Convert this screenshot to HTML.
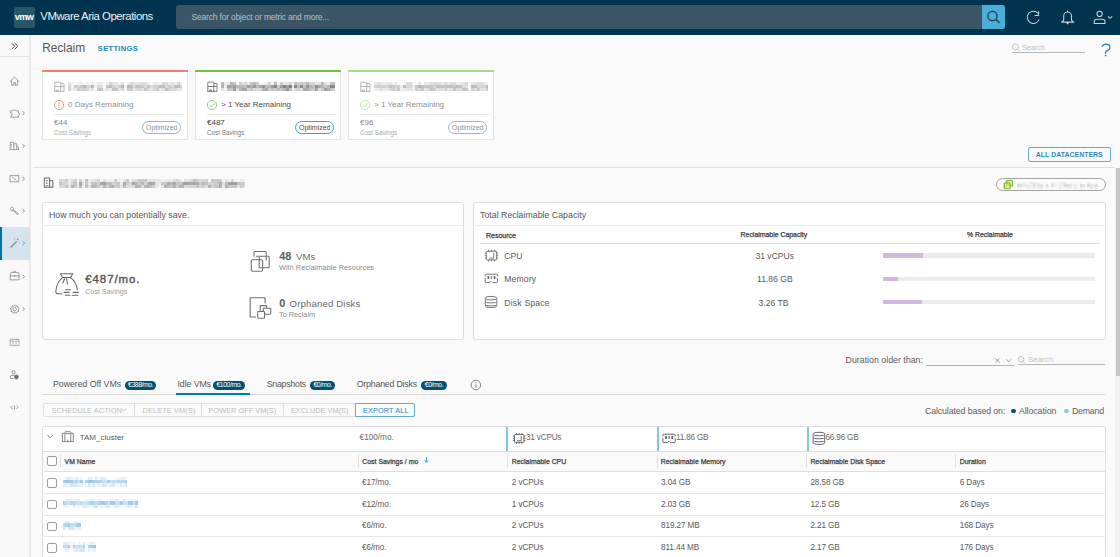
<!DOCTYPE html>
<html><head><meta charset="utf-8">
<style>
*{box-sizing:border-box;margin:0;padding:0}
html,body{width:1120px;height:557px;overflow:hidden;background:#fafafa;font-family:"Liberation Sans",sans-serif;color:#565656}
.a{position:absolute}
.t{position:absolute;white-space:nowrap;line-height:1}
svg{position:absolute;overflow:visible}
#hdr{left:0;top:0;width:1120px;height:34.5px;background:#00344e}
.blur{position:absolute;border-radius:1px}
.btn{position:absolute;top:403.5px;height:13.5px;border:1px solid #dcdcdc;border-right:none}
.bt{position:absolute;white-space:nowrap;line-height:1;font-size:7px;letter-spacing:.55px;color:#c3c3c3}
.badge{position:absolute;background:#004f74;border-radius:5px;height:8.8px;color:#fff;font-size:6.9px;line-height:8.5px;text-align:center;letter-spacing:-.45px}
.hl{position:absolute;height:1px;background:#e6e6e6}
.vl{position:absolute;width:1px;background:#e6e6e6}
.cb{position:absolute;width:9.4px;height:9.4px;border:1px solid #9d9d9d;border-radius:2px;background:#fff}
</style></head><body>

<!-- HEADER -->
<div id="hdr" class="a"></div>
<div class="a" style="left:14.3px;top:7px;width:20.6px;height:20.6px;background:#2a566b;border-radius:2px"></div>
<div class="t" style="left:14.8px;top:13.1px;font-size:9.2px;font-weight:700;color:#fff;letter-spacing:-.65px">vmw</div>
<div class="t" style="left:40.3px;top:10.9px;font-size:11.4px;letter-spacing:-.5px;color:#eef2f5">VMware Aria Operations</div>
<div class="a" style="left:176px;top:5px;width:829px;height:23.7px;background:#3a5566;border-radius:3px"></div>
<div class="t" style="left:191.6px;top:12.8px;font-size:8.5px;letter-spacing:-.2px;color:#b3c0c8">Search for object or metric and more...</div>
<div class="a" style="left:981.5px;top:5px;width:23.5px;height:23.7px;background:#49afd9;border-radius:0 3px 3px 0"></div>
<svg style="left:0;top:0" width="1120" height="35">
 <g fill="none" stroke="#1d3a4a" stroke-width="1.3"><circle cx="992.5" cy="16" r="4.6"/><path d="M995.8 19.3L999.5 23"/></g>
 <g fill="none" stroke="#c5d0d8" stroke-width="1.05" stroke-linejoin="round" stroke-linecap="round">
  <path d="M1037.8 13.1A6.1 6.1 0 1 0 1038.9 19.9"/><path d="M1035 15.5h3.6v-3.9"/>
  <path d="M1061.6 22.1h12.2M1062.3 22.1l1.4-2.2v-4a3.9 3.9 0 0 1 7.8 0v4l1.4 2.2M1066.6 22.4l1 1.5 1-1.5M1067.6 10.8v.9"/>
  <circle cx="1099.6" cy="13.9" r="2.6"/><path d="M1094.2 23.4v-1.8a2.4 2.4 0 0 1 2.4-2.3h6a2.4 2.4 0 0 1 2.4 2.3v1.8z"/>
  <path d="M1108.2 16.6l1.8 1.9 1.9-1.9"/>
 </g>
</svg>

<!-- SIDEBAR -->
<div class="a" style="left:0;top:34.5px;width:30px;height:523px;background:#f9f9f9"></div><div class="a" style="left:29.3px;top:34.5px;width:1.8px;height:523px;background:#e9e9e9"></div>
<div class="hl" style="left:0;top:56px;width:30px;background:#e3e3e3"></div>
<div class="a" style="left:0;top:227.3px;width:29.5px;height:32.3px;background:#d5e3ed"></div>
<div class="a" style="left:0;top:227.3px;width:2px;height:32.3px;background:#0072a3"></div>
<svg style="left:0;top:0" width="30" height="557">
 <g fill="none" stroke="#5a5a5a" stroke-width="1" stroke-linejoin="round" stroke-linecap="round">
  <path d="M11.8 43.3l2.9 2.9-2.9 2.9M14.9 43.3l2.9 2.9-2.9 2.9"/>
 </g>
 <g fill="none" stroke="#858585" stroke-width="0.8" stroke-linejoin="round">
  <!-- home -->
  <path d="M10.2 81.3L14.5 77L18.8 81.3M11.5 80.2v5h2.3v-2.6h1.6v2.6h2.3v-5"/>
  <!-- puzzle -->
  <path d="M10.3 110.8h2.6a1.5 1.5 0 0 1 2.9 0h2.6v2.3a1.4 1.4 0 0 1 0 2.7v1.4h-7.8l1.2-2.2a1.5 1.5 0 0 0-1.5-2.4z"/>
  <!-- buildings -->
  <path d="M10.2 149.6V142.3h3.6v7.3M13.8 143.8h3v5.8M16.8 146.3l1.8 1.3v2M9.8 149.6h9"/><path d="M11.4 144v1M11.4 146.5v1" />
  <!-- monitor -->
  <rect x="10" y="175.6" width="8.8" height="6.2"/><path d="M12.2 176.8l4.2 3.6"/>
  <!-- wrench -->
  <path d="M10.3 208.3l1.9-1.3 1.6 1.5-.9 1.2 5.6 4-1.1 1-4.6-4.6-1.2.8z"/>
  <!-- wand -->
  <path d="M10.5 247.6l6.2-6.2" stroke-width="1.3"/><path d="M17.6 238.6v1.6M16.8 239.4h1.6M14.5 238.5v.9M19.4 242.4v.9"/>
  <!-- briefcase -->
  <path d="M10.2 279.9v-5.5a2 2 0 0 1 2-2h4.9a2 2 0 0 1 2 2v5.5zM10.2 275.9h8.9M14.6 275.2v1.6M13.3 272.4v-.6h2.6v.6"/>
  <!-- gear -->
  <path d="M14.6 305l1.3 1 1.6-.2.3 1.6 1.3 1-.8 1.4.4 1.6-1.6.4-.8 1.4-1.5-.7-1.5.7-.8-1.4-1.6-.4.4-1.6-.8-1.4 1.3-1 .3-1.6 1.6.2z"/><circle cx="14.6" cy="309.2" r="1.8"/>
  <!-- calendar -->
  <rect x="10.1" y="339.4" width="8.9" height="6.2" stroke="#a0a0a0"/><path d="M10.1 341.2h8.9M12.3 338.4v1.8M16.8 338.4v1.8M13 341.5v4M16 341.5v4" stroke="#a8a8a8"/>
  <!-- user gear -->
  <circle cx="13.6" cy="372.2" r="1.6"/><path d="M10.2 378.4v-1.3a1.8 1.8 0 0 1 1.8-1.8h2.6M10.2 378.4h4"/><path d="M16.4 374.9l1.9.7v1.5a2.2 2.2 0 0 1-1.9 2.1 2.2 2.2 0 0 1-1.9-2.1v-1.5z" fill="#6a6a6a"/>
  <!-- code -->
  <path d="M12.6 405.8l-1.6 1.6 1.6 1.6M16.4 405.8l1.6 1.6-1.6 1.6M14.5 405.6v3.8"/>
 </g>
 <g fill="none" stroke="#7a7a7a" stroke-width="0.85">
  <path d="M22.6 111.2l1.9 1.9-1.9 1.9M22.6 144.2l1.9 1.9-1.9 1.9M22.6 176.8l1.9 1.9-1.9 1.9M22.6 209l1.9 1.9-1.9 1.9M22.6 241.4l1.9 1.9-1.9 1.9M22.6 274.7l1.9 1.9-1.9 1.9M22.6 307.2l1.9 1.9-1.9 1.9"/>
 </g>
</svg>

<!-- TITLE -->
<div class="t" style="left:42.2px;top:42.5px;font-size:11.9px;color:#565656">Reclaim</div>
<div class="t" style="left:97.8px;top:44.75px;font-size:7.5px;font-weight:700;letter-spacing:.35px;color:#1a86bd">SETTINGS</div>
<svg style="left:0;top:0" width="1120" height="60">
 <g fill="none" stroke="#bdbdbd" stroke-width="0.9"><circle cx="1015.5" cy="46.8" r="3"/><path d="M1017.6 48.9l2 2"/></g>
</svg>
<div class="t" style="left:1022.3px;top:44px;font-size:7.2px;color:#bcbcbc">Search</div>
<div class="hl" style="left:1012px;top:52px;width:73px;background:#b8b8b8"></div>
<svg style="left:0;top:0" width="1120" height="60"><path d="M1102.3 46.2C1103.2 44.9 1104.4 44.1 1106 44.1 1108.3 44.1 1110 45.5 1110 47.4 1110 49.4 1108.2 50 1106.9 50.8 1105.9 51.4 1105.5 52 1105.5 53.2" fill="none" stroke="#1a80bd" stroke-width="1.25" stroke-linecap="round"/><circle cx="1105.6" cy="55.5" r="0.85" fill="#1a80bd"/></svg>

<!-- CARDS -->
<!--CARDS-->
<div class="a" style="left:42px;top:70px;width:146px;height:69.8px;background:#fff;border:1px solid #e4e4e4;border-top:none"></div>
<div class="a" style="left:42px;top:70px;width:146px;height:2.3px;background:#f77b7b"></div>
<svg style="left:0;top:0" width="600" height="150"><g fill="none" stroke="#a5a5a5" stroke-width="0.85"><path d="M54.8 91.3V82.6a.5.5 0 0 1 .5-.5h5a.5.5 0 0 1 .5.5V91.3M60.8 83.6h2.8a.4.4 0 0 1 .4.4V91.3M54.4 91.4h9.9M55.1 86.5h8.7M56.5 91.3v-1.2h2v1.2"/></g></svg>
<div class="a" style="left:67.5px;top:81.8px;width:114.5px;height:9.30px;filter:blur(0.5px)"><div class="a" style="left:0;top:0.00px;width:114.5px;height:3.15px;background:linear-gradient(90deg,rgba(85,85,85,0.15) 0.0px 2.9px,rgba(85,85,85,0.06) 2.9px 5.9px,rgba(85,85,85,0.04) 5.9px 8.8px,rgba(85,85,85,0.08) 8.8px 11.7px,rgba(85,85,85,0.09) 11.7px 14.7px,rgba(85,85,85,0.04) 14.7px 17.6px,rgba(85,85,85,0.08) 17.6px 20.6px,rgba(85,85,85,0.05) 20.6px 23.5px,rgba(85,85,85,0.09) 23.5px 26.4px,rgba(85,85,85,0.05) 26.4px 29.4px,rgba(85,85,85,0.11) 29.4px 32.3px,rgba(85,85,85,0.11) 32.3px 35.2px,rgba(85,85,85,0.02) 35.2px 38.2px,rgba(85,85,85,0.09) 38.2px 41.1px,rgba(85,85,85,0.24) 41.1px 44.0px,rgba(85,85,85,0.17) 44.0px 47.0px,rgba(85,85,85,0.16) 47.0px 49.9px,rgba(85,85,85,0.06) 49.9px 52.8px,rgba(85,85,85,0.19) 52.8px 55.8px,rgba(85,85,85,0.02) 55.8px 58.7px,rgba(85,85,85,0.11) 58.7px 61.7px,rgba(85,85,85,0.25) 61.7px 64.6px,rgba(85,85,85,0.17) 64.6px 67.5px,rgba(85,85,85,0.15) 67.5px 70.5px,rgba(85,85,85,0.18) 70.5px 73.4px,rgba(85,85,85,0.21) 73.4px 76.3px,rgba(85,85,85,0.20) 76.3px 79.3px,rgba(85,85,85,0.08) 79.3px 82.2px,rgba(85,85,85,0.03) 82.2px 85.1px,rgba(85,85,85,0.10) 85.1px 88.1px,rgba(85,85,85,0.09) 88.1px 91.0px,rgba(85,85,85,0.07) 91.0px 93.9px,rgba(85,85,85,0.24) 93.9px 96.9px,rgba(85,85,85,0.22) 96.9px 99.8px,rgba(85,85,85,0.10) 99.8px 102.8px,rgba(85,85,85,0.17) 102.8px 105.7px,rgba(85,85,85,0.11) 105.7px 108.6px,rgba(85,85,85,0.23) 108.6px 111.6px,rgba(85,85,85,0.13) 111.6px 114.5px)"></div><div class="a" style="left:0;top:3.10px;width:114.5px;height:3.15px;background:linear-gradient(90deg,rgba(85,85,85,0.24) 0.0px 2.9px,rgba(85,85,85,0.07) 2.9px 5.9px,rgba(85,85,85,0.32) 5.9px 8.8px,rgba(85,85,85,0.24) 8.8px 11.7px,rgba(85,85,85,0.32) 11.7px 14.7px,rgba(85,85,85,0.40) 14.7px 17.6px,rgba(85,85,85,0.27) 17.6px 20.6px,rgba(85,85,85,0.23) 20.6px 23.5px,rgba(85,85,85,0.42) 23.5px 26.4px,rgba(85,85,85,0.09) 26.4px 29.4px,rgba(85,85,85,0.20) 29.4px 32.3px,rgba(85,85,85,0.19) 32.3px 35.2px,rgba(85,85,85,0.06) 35.2px 38.2px,rgba(85,85,85,0.33) 38.2px 41.1px,rgba(85,85,85,0.37) 41.1px 44.0px,rgba(85,85,85,0.28) 44.0px 47.0px,rgba(85,85,85,0.19) 47.0px 49.9px,rgba(85,85,85,0.27) 49.9px 52.8px,rgba(85,85,85,0.42) 52.8px 55.8px,rgba(85,85,85,0.09) 55.8px 58.7px,rgba(85,85,85,0.42) 58.7px 61.7px,rgba(85,85,85,0.39) 61.7px 64.6px,rgba(85,85,85,0.18) 64.6px 67.5px,rgba(85,85,85,0.36) 67.5px 70.5px,rgba(85,85,85,0.35) 70.5px 73.4px,rgba(85,85,85,0.31) 73.4px 76.3px,rgba(85,85,85,0.24) 76.3px 79.3px,rgba(85,85,85,0.34) 79.3px 82.2px,rgba(85,85,85,0.20) 82.2px 85.1px,rgba(85,85,85,0.28) 85.1px 88.1px,rgba(85,85,85,0.29) 88.1px 91.0px,rgba(85,85,85,0.41) 91.0px 93.9px,rgba(85,85,85,0.39) 93.9px 96.9px,rgba(85,85,85,0.24) 96.9px 99.8px,rgba(85,85,85,0.30) 99.8px 102.8px,rgba(85,85,85,0.22) 102.8px 105.7px,rgba(85,85,85,0.40) 105.7px 108.6px,rgba(85,85,85,0.39) 108.6px 111.6px,rgba(85,85,85,0.25) 111.6px 114.5px)"></div><div class="a" style="left:0;top:6.20px;width:114.5px;height:3.15px;background:linear-gradient(90deg,rgba(85,85,85,0.26) 0.0px 2.9px,rgba(85,85,85,0.08) 2.9px 5.9px,rgba(85,85,85,0.14) 5.9px 8.8px,rgba(85,85,85,0.29) 8.8px 11.7px,rgba(85,85,85,0.23) 11.7px 14.7px,rgba(85,85,85,0.29) 14.7px 17.6px,rgba(85,85,85,0.23) 17.6px 20.6px,rgba(85,85,85,0.10) 20.6px 23.5px,rgba(85,85,85,0.18) 23.5px 26.4px,rgba(85,85,85,0.03) 26.4px 29.4px,rgba(85,85,85,0.33) 29.4px 32.3px,rgba(85,85,85,0.32) 32.3px 35.2px,rgba(85,85,85,0.09) 35.2px 38.2px,rgba(85,85,85,0.18) 38.2px 41.1px,rgba(85,85,85,0.11) 41.1px 44.0px,rgba(85,85,85,0.32) 44.0px 47.0px,rgba(85,85,85,0.34) 47.0px 49.9px,rgba(85,85,85,0.12) 49.9px 52.8px,rgba(85,85,85,0.22) 52.8px 55.8px,rgba(85,85,85,0.04) 55.8px 58.7px,rgba(85,85,85,0.29) 58.7px 61.7px,rgba(85,85,85,0.29) 61.7px 64.6px,rgba(85,85,85,0.13) 64.6px 67.5px,rgba(85,85,85,0.22) 67.5px 70.5px,rgba(85,85,85,0.24) 70.5px 73.4px,rgba(85,85,85,0.17) 73.4px 76.3px,rgba(85,85,85,0.32) 76.3px 79.3px,rgba(85,85,85,0.21) 79.3px 82.2px,rgba(85,85,85,0.15) 82.2px 85.1px,rgba(85,85,85,0.23) 85.1px 88.1px,rgba(85,85,85,0.28) 88.1px 91.0px,rgba(85,85,85,0.15) 91.0px 93.9px,rgba(85,85,85,0.18) 93.9px 96.9px,rgba(85,85,85,0.35) 96.9px 99.8px,rgba(85,85,85,0.26) 99.8px 102.8px,rgba(85,85,85,0.21) 102.8px 105.7px,rgba(85,85,85,0.23) 105.7px 108.6px,rgba(85,85,85,0.13) 108.6px 111.6px,rgba(85,85,85,0.16) 111.6px 114.5px)"></div></div>
<svg style="left:0;top:0" width="600" height="150"><g fill="none" stroke="#f08a8a" stroke-width="0.9"><circle cx="59" cy="105" r="4.6"/><path d="M59 102.2v3.6M59 106.8v1"/></g></svg>
<div class="t" style="left:68px;top:101px;font-size:8px;color:#8f8f8f">0 Days Remaining</div>
<div class="hl" style="left:54px;top:114.3px;width:130px;background:#e8e8e8"></div>
<div class="t" style="left:54px;top:119.2px;font-size:8px;color:#8a8a8a">€44</div>
<div class="t" style="left:54px;top:129.8px;font-size:6.3px;color:#ababab">Cost Savings</div>
<div class="a" style="left:142px;top:121.3px;width:38.6px;height:12.3px;border:1px solid #7fbde0;border-radius:6.5px"></div>
<div class="t" style="left:146px;top:124.3px;font-size:7px;color:#8f8f8f">Optimized</div>
<div class="a" style="left:195px;top:70px;width:146px;height:69.8px;background:#fff;border:1px solid #e4e4e4;border-top:none"></div>
<div class="a" style="left:195px;top:70px;width:146px;height:2.3px;background:#72c044"></div>
<svg style="left:0;top:0" width="600" height="150"><g fill="none" stroke="#666666" stroke-width="0.85"><path d="M207.8 91.3V82.6a.5.5 0 0 1 .5-.5h5a.5.5 0 0 1 .5.5V91.3M213.8 83.6h2.8a.4.4 0 0 1 .4.4V91.3M207.4 91.4h9.9M208.1 86.5h8.7M209.5 91.3v-1.2h2v1.2"/></g></svg>
<div class="a" style="left:220.5px;top:81.8px;width:114.5px;height:9.30px;filter:blur(0.5px)"><div class="a" style="left:0;top:0.00px;width:114.5px;height:3.15px;background:linear-gradient(90deg,rgba(85,85,85,0.41) 0.0px 2.9px,rgba(85,85,85,0.11) 2.9px 5.9px,rgba(85,85,85,0.12) 5.9px 8.8px,rgba(85,85,85,0.42) 8.8px 11.7px,rgba(85,85,85,0.34) 11.7px 14.7px,rgba(85,85,85,0.06) 14.7px 17.6px,rgba(85,85,85,0.29) 17.6px 20.6px,rgba(85,85,85,0.16) 20.6px 23.5px,rgba(85,85,85,0.21) 23.5px 26.4px,rgba(85,85,85,0.14) 26.4px 29.4px,rgba(85,85,85,0.34) 29.4px 32.3px,rgba(85,85,85,0.40) 32.3px 35.2px,rgba(85,85,85,0.29) 35.2px 38.2px,rgba(85,85,85,0.06) 38.2px 41.1px,rgba(85,85,85,0.06) 41.1px 44.0px,rgba(85,85,85,0.10) 44.0px 47.0px,rgba(85,85,85,0.26) 47.0px 49.9px,rgba(85,85,85,0.05) 49.9px 52.8px,rgba(85,85,85,0.41) 52.8px 55.8px,rgba(85,85,85,0.07) 55.8px 58.7px,rgba(85,85,85,0.29) 58.7px 61.7px,rgba(85,85,85,0.14) 61.7px 64.6px,rgba(85,85,85,0.17) 64.6px 67.5px,rgba(85,85,85,0.26) 67.5px 70.5px,rgba(85,85,85,0.07) 70.5px 73.4px,rgba(85,85,85,0.34) 73.4px 76.3px,rgba(85,85,85,0.28) 76.3px 79.3px,rgba(85,85,85,0.30) 79.3px 82.2px,rgba(85,85,85,0.29) 82.2px 85.1px,rgba(85,85,85,0.39) 85.1px 88.1px,rgba(85,85,85,0.23) 88.1px 91.0px,rgba(85,85,85,0.25) 91.0px 93.9px,rgba(85,85,85,0.13) 93.9px 96.9px,rgba(85,85,85,0.19) 96.9px 99.8px,rgba(85,85,85,0.42) 99.8px 102.8px,rgba(85,85,85,0.19) 102.8px 105.7px,rgba(85,85,85,0.09) 105.7px 108.6px,rgba(85,85,85,0.34) 108.6px 111.6px,rgba(85,85,85,0.38) 111.6px 114.5px)"></div><div class="a" style="left:0;top:3.10px;width:114.5px;height:3.15px;background:linear-gradient(90deg,rgba(85,85,85,0.44) 0.0px 2.9px,rgba(85,85,85,0.12) 2.9px 5.9px,rgba(85,85,85,0.55) 5.9px 8.8px,rgba(85,85,85,0.49) 8.8px 11.7px,rgba(85,85,85,0.57) 11.7px 14.7px,rgba(85,85,85,0.42) 14.7px 17.6px,rgba(85,85,85,0.40) 17.6px 20.6px,rgba(85,85,85,0.40) 20.6px 23.5px,rgba(85,85,85,0.38) 23.5px 26.4px,rgba(85,85,85,0.57) 26.4px 29.4px,rgba(85,85,85,0.47) 29.4px 32.3px,rgba(85,85,85,0.59) 32.3px 35.2px,rgba(85,85,85,0.39) 35.2px 38.2px,rgba(85,85,85,0.51) 38.2px 41.1px,rgba(85,85,85,0.63) 41.1px 44.0px,rgba(85,85,85,0.40) 44.0px 47.0px,rgba(85,85,85,0.42) 47.0px 49.9px,rgba(85,85,85,0.61) 49.9px 52.8px,rgba(85,85,85,0.67) 52.8px 55.8px,rgba(85,85,85,0.30) 55.8px 58.7px,rgba(85,85,85,0.56) 58.7px 61.7px,rgba(85,85,85,0.72) 61.7px 64.6px,rgba(85,85,85,0.55) 64.6px 67.5px,rgba(85,85,85,0.72) 67.5px 70.5px,rgba(85,85,85,0.12) 70.5px 73.4px,rgba(85,85,85,0.68) 73.4px 76.3px,rgba(85,85,85,0.38) 76.3px 79.3px,rgba(85,85,85,0.69) 79.3px 82.2px,rgba(85,85,85,0.36) 82.2px 85.1px,rgba(85,85,85,0.61) 85.1px 88.1px,rgba(85,85,85,0.44) 88.1px 91.0px,rgba(85,85,85,0.36) 91.0px 93.9px,rgba(85,85,85,0.65) 93.9px 96.9px,rgba(85,85,85,0.50) 96.9px 99.8px,rgba(85,85,85,0.43) 99.8px 102.8px,rgba(85,85,85,0.32) 102.8px 105.7px,rgba(85,85,85,0.42) 105.7px 108.6px,rgba(85,85,85,0.70) 108.6px 111.6px,rgba(85,85,85,0.67) 111.6px 114.5px)"></div><div class="a" style="left:0;top:6.20px;width:114.5px;height:3.15px;background:linear-gradient(90deg,rgba(85,85,85,0.17) 0.0px 2.9px,rgba(85,85,85,0.06) 2.9px 5.9px,rgba(85,85,85,0.36) 5.9px 8.8px,rgba(85,85,85,0.31) 8.8px 11.7px,rgba(85,85,85,0.57) 11.7px 14.7px,rgba(85,85,85,0.21) 14.7px 17.6px,rgba(85,85,85,0.42) 17.6px 20.6px,rgba(85,85,85,0.52) 20.6px 23.5px,rgba(85,85,85,0.49) 23.5px 26.4px,rgba(85,85,85,0.26) 26.4px 29.4px,rgba(85,85,85,0.34) 29.4px 32.3px,rgba(85,85,85,0.20) 32.3px 35.2px,rgba(85,85,85,0.19) 35.2px 38.2px,rgba(85,85,85,0.20) 38.2px 41.1px,rgba(85,85,85,0.46) 41.1px 44.0px,rgba(85,85,85,0.52) 44.0px 47.0px,rgba(85,85,85,0.28) 47.0px 49.9px,rgba(85,85,85,0.36) 49.9px 52.8px,rgba(85,85,85,0.31) 52.8px 55.8px,rgba(85,85,85,0.41) 55.8px 58.7px,rgba(85,85,85,0.33) 58.7px 61.7px,rgba(85,85,85,0.43) 61.7px 64.6px,rgba(85,85,85,0.59) 64.6px 67.5px,rgba(85,85,85,0.37) 67.5px 70.5px,rgba(85,85,85,0.09) 70.5px 73.4px,rgba(85,85,85,0.23) 73.4px 76.3px,rgba(85,85,85,0.25) 76.3px 79.3px,rgba(85,85,85,0.20) 79.3px 82.2px,rgba(85,85,85,0.50) 82.2px 85.1px,rgba(85,85,85,0.47) 85.1px 88.1px,rgba(85,85,85,0.36) 88.1px 91.0px,rgba(85,85,85,0.32) 91.0px 93.9px,rgba(85,85,85,0.51) 93.9px 96.9px,rgba(85,85,85,0.19) 96.9px 99.8px,rgba(85,85,85,0.31) 99.8px 102.8px,rgba(85,85,85,0.57) 102.8px 105.7px,rgba(85,85,85,0.47) 105.7px 108.6px,rgba(85,85,85,0.36) 108.6px 111.6px,rgba(85,85,85,0.29) 111.6px 114.5px)"></div></div>
<svg style="left:0;top:0" width="600" height="150"><g fill="none" stroke="#8fcc6c" stroke-width="0.9"><circle cx="212" cy="105" r="4.6"/><path d="M209.5 105l1.8 1.9 3.3-3.6"/></g></svg>
<div class="t" style="left:221px;top:101px;font-size:8px;color:#4a4a4a">&gt; 1 Year Remaining</div>
<div class="hl" style="left:207px;top:114.3px;width:130px;background:#e8e8e8"></div>
<div class="t" style="left:207px;top:119.2px;font-size:8px;color:#3c3c3c">€487</div>
<div class="t" style="left:207px;top:129.8px;font-size:6.3px;color:#7a7a7a">Cost Savings</div>
<div class="a" style="left:295px;top:121.3px;width:38.6px;height:12.3px;border:1px solid #3d9fd6;border-radius:6.5px"></div>
<div class="t" style="left:299px;top:124.3px;font-size:7px;color:#4a4a4a">Optimized</div>
<div class="a" style="left:348px;top:70px;width:146px;height:69.8px;background:#fff;border:1px solid #e4e4e4;border-top:none"></div>
<div class="a" style="left:348px;top:70px;width:146px;height:2.3px;background:#a6d98a"></div>
<svg style="left:0;top:0" width="600" height="150"><g fill="none" stroke="#a5a5a5" stroke-width="0.85"><path d="M360.8 91.3V82.6a.5.5 0 0 1 .5-.5h5a.5.5 0 0 1 .5.5V91.3M366.8 83.6h2.8a.4.4 0 0 1 .4.4V91.3M360.4 91.4h9.9M361.1 86.5h8.7M362.5 91.3v-1.2h2v1.2"/></g></svg>
<div class="a" style="left:373.5px;top:81.8px;width:114.5px;height:9.30px;filter:blur(0.5px)"><div class="a" style="left:0;top:0.00px;width:114.5px;height:3.15px;background:linear-gradient(90deg,rgba(85,85,85,0.14) 0.0px 2.9px,rgba(85,85,85,0.17) 2.9px 5.9px,rgba(85,85,85,0.13) 5.9px 8.8px,rgba(85,85,85,0.08) 8.8px 11.7px,rgba(85,85,85,0.14) 11.7px 14.7px,rgba(85,85,85,0.13) 14.7px 17.6px,rgba(85,85,85,0.07) 17.6px 20.6px,rgba(85,85,85,0.15) 20.6px 23.5px,rgba(85,85,85,0.03) 23.5px 26.4px,rgba(85,85,85,0.01) 26.4px 29.4px,rgba(85,85,85,0.03) 29.4px 32.3px,rgba(85,85,85,0.21) 32.3px 35.2px,rgba(85,85,85,0.21) 35.2px 38.2px,rgba(85,85,85,0.07) 38.2px 41.1px,rgba(85,85,85,0.05) 41.1px 44.0px,rgba(85,85,85,0.16) 44.0px 47.0px,rgba(85,85,85,0.03) 47.0px 49.9px,rgba(85,85,85,0.14) 49.9px 52.8px,rgba(85,85,85,0.13) 52.8px 55.8px,rgba(85,85,85,0.19) 55.8px 58.7px,rgba(85,85,85,0.22) 58.7px 61.7px,rgba(85,85,85,0.22) 61.7px 64.6px,rgba(85,85,85,0.18) 64.6px 67.5px,rgba(85,85,85,0.12) 67.5px 70.5px,rgba(85,85,85,0.22) 70.5px 73.4px,rgba(85,85,85,0.12) 73.4px 76.3px,rgba(85,85,85,0.20) 76.3px 79.3px,rgba(85,85,85,0.21) 79.3px 82.2px,rgba(85,85,85,0.08) 82.2px 85.1px,rgba(85,85,85,0.12) 85.1px 88.1px,rgba(85,85,85,0.16) 88.1px 91.0px,rgba(85,85,85,0.24) 91.0px 93.9px,rgba(85,85,85,0.06) 93.9px 96.9px,rgba(85,85,85,0.14) 96.9px 99.8px,rgba(85,85,85,0.17) 99.8px 102.8px,rgba(85,85,85,0.22) 102.8px 105.7px,rgba(85,85,85,0.21) 105.7px 108.6px,rgba(85,85,85,0.14) 108.6px 111.6px,rgba(85,85,85,0.08) 111.6px 114.5px)"></div><div class="a" style="left:0;top:3.10px;width:114.5px;height:3.15px;background:linear-gradient(90deg,rgba(85,85,85,0.25) 0.0px 2.9px,rgba(85,85,85,0.28) 2.9px 5.9px,rgba(85,85,85,0.26) 5.9px 8.8px,rgba(85,85,85,0.27) 8.8px 11.7px,rgba(85,85,85,0.24) 11.7px 14.7px,rgba(85,85,85,0.35) 14.7px 17.6px,rgba(85,85,85,0.31) 17.6px 20.6px,rgba(85,85,85,0.24) 20.6px 23.5px,rgba(85,85,85,0.27) 23.5px 26.4px,rgba(85,85,85,0.13) 26.4px 29.4px,rgba(85,85,85,0.38) 29.4px 32.3px,rgba(85,85,85,0.21) 32.3px 35.2px,rgba(85,85,85,0.25) 35.2px 38.2px,rgba(85,85,85,0.11) 38.2px 41.1px,rgba(85,85,85,0.31) 41.1px 44.0px,rgba(85,85,85,0.42) 44.0px 47.0px,rgba(85,85,85,0.37) 47.0px 49.9px,rgba(85,85,85,0.32) 49.9px 52.8px,rgba(85,85,85,0.35) 52.8px 55.8px,rgba(85,85,85,0.33) 55.8px 58.7px,rgba(85,85,85,0.23) 58.7px 61.7px,rgba(85,85,85,0.38) 61.7px 64.6px,rgba(85,85,85,0.33) 64.6px 67.5px,rgba(85,85,85,0.35) 67.5px 70.5px,rgba(85,85,85,0.33) 70.5px 73.4px,rgba(85,85,85,0.37) 73.4px 76.3px,rgba(85,85,85,0.38) 76.3px 79.3px,rgba(85,85,85,0.32) 79.3px 82.2px,rgba(85,85,85,0.38) 82.2px 85.1px,rgba(85,85,85,0.35) 85.1px 88.1px,rgba(85,85,85,0.22) 88.1px 91.0px,rgba(85,85,85,0.18) 91.0px 93.9px,rgba(85,85,85,0.06) 93.9px 96.9px,rgba(85,85,85,0.42) 96.9px 99.8px,rgba(85,85,85,0.38) 99.8px 102.8px,rgba(85,85,85,0.25) 102.8px 105.7px,rgba(85,85,85,0.26) 105.7px 108.6px,rgba(85,85,85,0.25) 108.6px 111.6px,rgba(85,85,85,0.41) 111.6px 114.5px)"></div><div class="a" style="left:0;top:6.20px;width:114.5px;height:3.15px;background:linear-gradient(90deg,rgba(85,85,85,0.11) 0.0px 2.9px,rgba(85,85,85,0.13) 2.9px 5.9px,rgba(85,85,85,0.18) 5.9px 8.8px,rgba(85,85,85,0.11) 8.8px 11.7px,rgba(85,85,85,0.11) 11.7px 14.7px,rgba(85,85,85,0.22) 14.7px 17.6px,rgba(85,85,85,0.29) 17.6px 20.6px,rgba(85,85,85,0.20) 20.6px 23.5px,rgba(85,85,85,0.33) 23.5px 26.4px,rgba(85,85,85,0.07) 26.4px 29.4px,rgba(85,85,85,0.12) 29.4px 32.3px,rgba(85,85,85,0.14) 32.3px 35.2px,rgba(85,85,85,0.18) 35.2px 38.2px,rgba(85,85,85,0.08) 38.2px 41.1px,rgba(85,85,85,0.29) 41.1px 44.0px,rgba(85,85,85,0.20) 44.0px 47.0px,rgba(85,85,85,0.32) 47.0px 49.9px,rgba(85,85,85,0.15) 49.9px 52.8px,rgba(85,85,85,0.21) 52.8px 55.8px,rgba(85,85,85,0.34) 55.8px 58.7px,rgba(85,85,85,0.29) 58.7px 61.7px,rgba(85,85,85,0.17) 61.7px 64.6px,rgba(85,85,85,0.22) 64.6px 67.5px,rgba(85,85,85,0.18) 67.5px 70.5px,rgba(85,85,85,0.29) 70.5px 73.4px,rgba(85,85,85,0.15) 73.4px 76.3px,rgba(85,85,85,0.19) 76.3px 79.3px,rgba(85,85,85,0.33) 79.3px 82.2px,rgba(85,85,85,0.22) 82.2px 85.1px,rgba(85,85,85,0.19) 85.1px 88.1px,rgba(85,85,85,0.34) 88.1px 91.0px,rgba(85,85,85,0.33) 91.0px 93.9px,rgba(85,85,85,0.05) 93.9px 96.9px,rgba(85,85,85,0.26) 96.9px 99.8px,rgba(85,85,85,0.18) 99.8px 102.8px,rgba(85,85,85,0.31) 102.8px 105.7px,rgba(85,85,85,0.17) 105.7px 108.6px,rgba(85,85,85,0.16) 108.6px 111.6px,rgba(85,85,85,0.30) 111.6px 114.5px)"></div></div>
<svg style="left:0;top:0" width="600" height="150"><g fill="none" stroke="#bfe2a8" stroke-width="0.9"><circle cx="365" cy="105" r="4.6"/><path d="M362.5 105l1.8 1.9 3.3-3.6"/></g></svg>
<div class="t" style="left:374px;top:101px;font-size:8px;color:#8f8f8f">&gt; 1 Year Remaining</div>
<div class="hl" style="left:360px;top:114.3px;width:130px;background:#e8e8e8"></div>
<div class="t" style="left:360px;top:119.2px;font-size:8px;color:#8a8a8a">€96</div>
<div class="t" style="left:360px;top:129.8px;font-size:6.3px;color:#ababab">Cost Savings</div>
<div class="a" style="left:448px;top:121.3px;width:38.6px;height:12.3px;border:1px solid #7fbde0;border-radius:6.5px"></div>
<div class="t" style="left:452px;top:124.3px;font-size:7px;color:#8f8f8f">Optimized</div>

<!--/CARDS-->
<!--P2-->
<!-- ALL DATACENTERS -->
<div class="a" style="left:1028px;top:147.2px;width:83.3px;height:14.6px;border:1px solid #62abd4;border-radius:2px"></div>
<div class="t" style="left:1035.8px;top:152px;font-size:6.9px;font-weight:700;letter-spacing:.05px;color:#3089bd">ALL DATACENTERS</div>
<div class="hl" style="left:33px;top:167px;width:1082px;background:#e0e0e0"></div>
<!-- scrollbar -->
<div class="a" style="left:1115px;top:168px;width:5px;height:389px;background:#f1f1f1"></div>
<div class="a" style="left:1115.5px;top:168px;width:4.5px;height:208px;background:#c6c6c6"></div>

<!-- object row -->
<svg style="left:0;top:0" width="120" height="200"><g fill="none" stroke="#555" stroke-width="0.9"><path d="M44.3 187.2V178h5.3v9.2M49.6 180.7h3.2v6.5M44 187.2h9.2M46 180.7h1.6M46 183.2h1.6M46 185.7h1.6"/></g></svg>
<!--DCNAME--><div class="a" style="left:58.7px;top:178.5px;width:186.6px;height:9.00px;filter:blur(0.5px)"><div class="a" style="left:0;top:0.00px;width:186.6px;height:3.05px;background:linear-gradient(90deg,rgba(110,110,110,0.24) 0.0px 2.9px,rgba(110,110,110,0.20) 2.9px 5.8px,rgba(110,110,110,0.34) 5.8px 8.7px,rgba(110,110,110,0.11) 8.7px 11.7px,rgba(110,110,110,0.21) 11.7px 14.6px,rgba(110,110,110,0.28) 14.6px 17.5px,rgba(110,110,110,0.02) 17.5px 20.4px,rgba(110,110,110,0.29) 20.4px 23.3px,rgba(110,110,110,0.08) 23.3px 26.2px,rgba(110,110,110,0.40) 26.2px 29.2px,rgba(110,110,110,0.10) 29.2px 32.1px,rgba(110,110,110,0.14) 32.1px 35.0px,rgba(110,110,110,0.17) 35.0px 37.9px,rgba(110,110,110,0.28) 37.9px 40.8px,rgba(110,110,110,0.04) 40.8px 43.7px,rgba(110,110,110,0.20) 43.7px 46.6px,rgba(110,110,110,0.09) 46.6px 49.6px,rgba(110,110,110,0.07) 49.6px 52.5px,rgba(110,110,110,0.05) 52.5px 55.4px,rgba(110,110,110,0.31) 55.4px 58.3px,rgba(110,110,110,0.08) 58.3px 61.2px,rgba(110,110,110,0.04) 61.2px 64.1px,rgba(110,110,110,0.17) 64.1px 67.1px,rgba(110,110,110,0.35) 67.1px 70.0px,rgba(110,110,110,0.06) 70.0px 72.9px,rgba(110,110,110,0.20) 72.9px 75.8px,rgba(110,110,110,0.23) 75.8px 78.7px,rgba(110,110,110,0.36) 78.7px 81.6px,rgba(110,110,110,0.33) 81.6px 84.6px,rgba(110,110,110,0.35) 84.6px 87.5px,rgba(110,110,110,0.13) 87.5px 90.4px,rgba(110,110,110,0.18) 90.4px 93.3px,rgba(110,110,110,0.16) 93.3px 96.2px,rgba(110,110,110,0.11) 96.2px 99.1px,rgba(110,110,110,0.12) 99.1px 102.0px,rgba(110,110,110,0.09) 102.0px 105.0px,rgba(110,110,110,0.10) 105.0px 107.9px,rgba(110,110,110,0.12) 107.9px 110.8px,rgba(110,110,110,0.12) 110.8px 113.7px,rgba(110,110,110,0.21) 113.7px 116.6px,rgba(110,110,110,0.25) 116.6px 119.5px,rgba(110,110,110,0.13) 119.5px 122.5px,rgba(110,110,110,0.03) 122.5px 125.4px,rgba(110,110,110,0.19) 125.4px 128.3px,rgba(110,110,110,0.17) 128.3px 131.2px,rgba(110,110,110,0.24) 131.2px 134.1px,rgba(110,110,110,0.38) 134.1px 137.0px,rgba(110,110,110,0.29) 137.0px 139.9px,rgba(110,110,110,0.22) 139.9px 142.9px,rgba(110,110,110,0.26) 142.9px 145.8px,rgba(110,110,110,0.28) 145.8px 148.7px,rgba(110,110,110,0.05) 148.7px 151.6px,rgba(110,110,110,0.36) 151.6px 154.5px,rgba(110,110,110,0.32) 154.5px 157.4px,rgba(110,110,110,0.35) 157.4px 160.4px,rgba(110,110,110,0.33) 160.4px 163.3px,rgba(110,110,110,0.05) 163.3px 166.2px,rgba(110,110,110,0.18) 166.2px 169.1px,rgba(110,110,110,0.07) 169.1px 172.0px,rgba(110,110,110,0.26) 172.0px 174.9px,rgba(110,110,110,0.05) 174.9px 177.9px,rgba(110,110,110,0.05) 177.9px 180.8px,rgba(110,110,110,0.11) 180.8px 183.7px,rgba(110,110,110,0.09) 183.7px 186.6px)"></div><div class="a" style="left:0;top:3.00px;width:186.6px;height:3.05px;background:linear-gradient(90deg,rgba(110,110,110,0.39) 0.0px 2.9px,rgba(110,110,110,0.27) 2.9px 5.8px,rgba(110,110,110,0.25) 5.8px 8.7px,rgba(110,110,110,0.09) 8.7px 11.7px,rgba(110,110,110,0.29) 11.7px 14.6px,rgba(110,110,110,0.40) 14.6px 17.5px,rgba(110,110,110,0.08) 17.5px 20.4px,rgba(110,110,110,0.60) 20.4px 23.3px,rgba(110,110,110,0.15) 23.3px 26.2px,rgba(110,110,110,0.31) 26.2px 29.2px,rgba(110,110,110,0.11) 29.2px 32.1px,rgba(110,110,110,0.39) 32.1px 35.0px,rgba(110,110,110,0.40) 35.0px 37.9px,rgba(110,110,110,0.30) 37.9px 40.8px,rgba(110,110,110,0.59) 40.8px 43.7px,rgba(110,110,110,0.65) 43.7px 46.6px,rgba(110,110,110,0.44) 46.6px 49.6px,rgba(110,110,110,0.44) 49.6px 52.5px,rgba(110,110,110,0.28) 52.5px 55.4px,rgba(110,110,110,0.29) 55.4px 58.3px,rgba(110,110,110,0.39) 58.3px 61.2px,rgba(110,110,110,0.11) 61.2px 64.1px,rgba(110,110,110,0.58) 64.1px 67.1px,rgba(110,110,110,0.31) 67.1px 70.0px,rgba(110,110,110,0.26) 70.0px 72.9px,rgba(110,110,110,0.63) 72.9px 75.8px,rgba(110,110,110,0.46) 75.8px 78.7px,rgba(110,110,110,0.31) 78.7px 81.6px,rgba(110,110,110,0.47) 81.6px 84.6px,rgba(110,110,110,0.26) 84.6px 87.5px,rgba(110,110,110,0.46) 87.5px 90.4px,rgba(110,110,110,0.64) 90.4px 93.3px,rgba(110,110,110,0.60) 93.3px 96.2px,rgba(110,110,110,0.16) 96.2px 99.1px,rgba(110,110,110,0.11) 99.1px 102.0px,rgba(110,110,110,0.40) 102.0px 105.0px,rgba(110,110,110,0.32) 105.0px 107.9px,rgba(110,110,110,0.56) 107.9px 110.8px,rgba(110,110,110,0.46) 110.8px 113.7px,rgba(110,110,110,0.56) 113.7px 116.6px,rgba(110,110,110,0.38) 116.6px 119.5px,rgba(110,110,110,0.34) 119.5px 122.5px,rgba(110,110,110,0.57) 122.5px 125.4px,rgba(110,110,110,0.64) 125.4px 128.3px,rgba(110,110,110,0.59) 128.3px 131.2px,rgba(110,110,110,0.57) 131.2px 134.1px,rgba(110,110,110,0.58) 134.1px 137.0px,rgba(110,110,110,0.55) 137.0px 139.9px,rgba(110,110,110,0.34) 139.9px 142.9px,rgba(110,110,110,0.46) 142.9px 145.8px,rgba(110,110,110,0.39) 145.8px 148.7px,rgba(110,110,110,0.26) 148.7px 151.6px,rgba(110,110,110,0.26) 151.6px 154.5px,rgba(110,110,110,0.36) 154.5px 157.4px,rgba(110,110,110,0.35) 157.4px 160.4px,rgba(110,110,110,0.53) 160.4px 163.3px,rgba(110,110,110,0.19) 163.3px 166.2px,rgba(110,110,110,0.43) 166.2px 169.1px,rgba(110,110,110,0.62) 169.1px 172.0px,rgba(110,110,110,0.65) 172.0px 174.9px,rgba(110,110,110,0.63) 174.9px 177.9px,rgba(110,110,110,0.40) 177.9px 180.8px,rgba(110,110,110,0.34) 180.8px 183.7px,rgba(110,110,110,0.34) 183.7px 186.6px)"></div><div class="a" style="left:0;top:6.00px;width:186.6px;height:3.05px;background:linear-gradient(90deg,rgba(110,110,110,0.23) 0.0px 2.9px,rgba(110,110,110,0.23) 2.9px 5.8px,rgba(110,110,110,0.40) 5.8px 8.7px,rgba(110,110,110,0.15) 8.7px 11.7px,rgba(110,110,110,0.49) 11.7px 14.6px,rgba(110,110,110,0.34) 14.6px 17.5px,rgba(110,110,110,0.12) 17.5px 20.4px,rgba(110,110,110,0.47) 20.4px 23.3px,rgba(110,110,110,0.06) 23.3px 26.2px,rgba(110,110,110,0.41) 26.2px 29.2px,rgba(110,110,110,0.15) 29.2px 32.1px,rgba(110,110,110,0.46) 32.1px 35.0px,rgba(110,110,110,0.45) 35.0px 37.9px,rgba(110,110,110,0.34) 37.9px 40.8px,rgba(110,110,110,0.22) 40.8px 43.7px,rgba(110,110,110,0.47) 43.7px 46.6px,rgba(110,110,110,0.28) 46.6px 49.6px,rgba(110,110,110,0.47) 49.6px 52.5px,rgba(110,110,110,0.54) 52.5px 55.4px,rgba(110,110,110,0.31) 55.4px 58.3px,rgba(110,110,110,0.31) 58.3px 61.2px,rgba(110,110,110,0.16) 61.2px 64.1px,rgba(110,110,110,0.44) 64.1px 67.1px,rgba(110,110,110,0.22) 67.1px 70.0px,rgba(110,110,110,0.20) 70.0px 72.9px,rgba(110,110,110,0.21) 72.9px 75.8px,rgba(110,110,110,0.51) 75.8px 78.7px,rgba(110,110,110,0.47) 78.7px 81.6px,rgba(110,110,110,0.21) 81.6px 84.6px,rgba(110,110,110,0.48) 84.6px 87.5px,rgba(110,110,110,0.54) 87.5px 90.4px,rgba(110,110,110,0.41) 90.4px 93.3px,rgba(110,110,110,0.29) 93.3px 96.2px,rgba(110,110,110,0.11) 96.2px 99.1px,rgba(110,110,110,0.06) 99.1px 102.0px,rgba(110,110,110,0.16) 102.0px 105.0px,rgba(110,110,110,0.54) 105.0px 107.9px,rgba(110,110,110,0.41) 107.9px 110.8px,rgba(110,110,110,0.36) 110.8px 113.7px,rgba(110,110,110,0.52) 113.7px 116.6px,rgba(110,110,110,0.32) 116.6px 119.5px,rgba(110,110,110,0.50) 119.5px 122.5px,rgba(110,110,110,0.48) 122.5px 125.4px,rgba(110,110,110,0.23) 125.4px 128.3px,rgba(110,110,110,0.25) 128.3px 131.2px,rgba(110,110,110,0.27) 131.2px 134.1px,rgba(110,110,110,0.25) 134.1px 137.0px,rgba(110,110,110,0.38) 137.0px 139.9px,rgba(110,110,110,0.25) 139.9px 142.9px,rgba(110,110,110,0.32) 142.9px 145.8px,rgba(110,110,110,0.20) 145.8px 148.7px,rgba(110,110,110,0.51) 148.7px 151.6px,rgba(110,110,110,0.29) 151.6px 154.5px,rgba(110,110,110,0.33) 154.5px 157.4px,rgba(110,110,110,0.38) 157.4px 160.4px,rgba(110,110,110,0.51) 160.4px 163.3px,rgba(110,110,110,0.10) 163.3px 166.2px,rgba(110,110,110,0.52) 166.2px 169.1px,rgba(110,110,110,0.35) 169.1px 172.0px,rgba(110,110,110,0.36) 172.0px 174.9px,rgba(110,110,110,0.36) 174.9px 177.9px,rgba(110,110,110,0.16) 177.9px 180.8px,rgba(110,110,110,0.33) 180.8px 183.7px,rgba(110,110,110,0.22) 183.7px 186.6px)"></div></div><!--/DCNAME-->
<div class="a" style="left:996.3px;top:178.3px;width:109.4px;height:12.4px;border:1px solid #a3a3a3;border-radius:6.5px;background:#fcfcfc"></div>
<svg style="left:0;top:0" width="1120" height="200"><g stroke="#7cc443" stroke-width="1.5" fill="#f3fae8">
 <rect x="1006.6" y="180.6" width="5.8" height="5.4" rx="0.8"/><rect x="1004.3" y="182.9" width="5.8" height="5.7" rx="0.8"/></g>
 <circle cx="1008.2" cy="183.9" r="1.5" fill="#f4b41f"/><circle cx="1006.3" cy="185.8" r="1.2" fill="#f6cf3e"/>
</svg>
<!--PILLNAME--><div class="a" style="left:1017px;top:181.5px;width:81px;height:7.20px;filter:blur(0.45px)"><div class="a" style="left:0;top:0.00px;width:81px;height:2.05px;background:linear-gradient(90deg,rgba(140,140,140,0.10) 0.0px 2.6px,rgba(140,140,140,0.07) 2.6px 5.2px,rgba(140,140,140,0.10) 5.2px 7.8px,rgba(140,140,140,0.07) 7.8px 10.5px,rgba(140,140,140,0.04) 10.5px 13.1px,rgba(140,140,140,0.15) 13.1px 15.7px,rgba(140,140,140,0.15) 15.7px 18.3px,rgba(140,140,140,0.13) 18.3px 20.9px,rgba(140,140,140,0.11) 20.9px 23.5px,rgba(140,140,140,0.05) 23.5px 26.1px,rgba(140,140,140,0.01) 26.1px 28.7px,rgba(140,140,140,0.04) 28.7px 31.4px,rgba(140,140,140,0.00) 31.4px 34.0px,rgba(140,140,140,0.11) 34.0px 36.6px,rgba(140,140,140,0.06) 36.6px 39.2px,rgba(140,140,140,0.04) 39.2px 41.8px,rgba(140,140,140,0.06) 41.8px 44.4px,rgba(140,140,140,0.14) 44.4px 47.0px,rgba(140,140,140,0.13) 47.0px 49.6px,rgba(140,140,140,0.00) 49.6px 52.3px,rgba(140,140,140,0.03) 52.3px 54.9px,rgba(140,140,140,0.04) 54.9px 57.5px,rgba(140,140,140,0.07) 57.5px 60.1px,rgba(140,140,140,0.04) 60.1px 62.7px,rgba(140,140,140,0.06) 62.7px 65.3px,rgba(140,140,140,0.01) 65.3px 67.9px,rgba(140,140,140,0.03) 67.9px 70.5px,rgba(140,140,140,0.12) 70.5px 73.2px,rgba(140,140,140,0.04) 73.2px 75.8px,rgba(140,140,140,0.01) 75.8px 78.4px,rgba(140,140,140,0.05) 78.4px 81.0px)"></div><div class="a" style="left:0;top:2.00px;width:81px;height:3.05px;background:linear-gradient(90deg,rgba(140,140,140,0.29) 0.0px 2.6px,rgba(140,140,140,0.25) 2.6px 5.2px,rgba(140,140,140,0.12) 5.2px 7.8px,rgba(140,140,140,0.15) 7.8px 10.5px,rgba(140,140,140,0.12) 10.5px 13.1px,rgba(140,140,140,0.11) 13.1px 15.7px,rgba(140,140,140,0.26) 15.7px 18.3px,rgba(140,140,140,0.14) 18.3px 20.9px,rgba(140,140,140,0.21) 20.9px 23.5px,rgba(140,140,140,0.19) 23.5px 26.1px,rgba(140,140,140,0.04) 26.1px 28.7px,rgba(140,140,140,0.25) 28.7px 31.4px,rgba(140,140,140,0.04) 31.4px 34.0px,rgba(140,140,140,0.23) 34.0px 36.6px,rgba(140,140,140,0.12) 36.6px 39.2px,rgba(140,140,140,0.06) 39.2px 41.8px,rgba(140,140,140,0.14) 41.8px 44.4px,rgba(140,140,140,0.15) 44.4px 47.0px,rgba(140,140,140,0.29) 47.0px 49.6px,rgba(140,140,140,0.26) 49.6px 52.3px,rgba(140,140,140,0.16) 52.3px 54.9px,rgba(140,140,140,0.08) 54.9px 57.5px,rgba(140,140,140,0.14) 57.5px 60.1px,rgba(140,140,140,0.05) 60.1px 62.7px,rgba(140,140,140,0.27) 62.7px 65.3px,rgba(140,140,140,0.23) 65.3px 67.9px,rgba(140,140,140,0.04) 67.9px 70.5px,rgba(140,140,140,0.30) 70.5px 73.2px,rgba(140,140,140,0.14) 73.2px 75.8px,rgba(140,140,140,0.15) 75.8px 78.4px,rgba(140,140,140,0.25) 78.4px 81.0px)"></div><div class="a" style="left:0;top:5.00px;width:81px;height:2.25px;background:linear-gradient(90deg,rgba(140,140,140,0.08) 0.0px 2.6px,rgba(140,140,140,0.07) 2.6px 5.2px,rgba(140,140,140,0.04) 5.2px 7.8px,rgba(140,140,140,0.04) 7.8px 10.5px,rgba(140,140,140,0.12) 10.5px 13.1px,rgba(140,140,140,0.07) 13.1px 15.7px,rgba(140,140,140,0.12) 15.7px 18.3px,rgba(140,140,140,0.09) 18.3px 20.9px,rgba(140,140,140,0.10) 20.9px 23.5px,rgba(140,140,140,0.17) 23.5px 26.1px,rgba(140,140,140,0.03) 26.1px 28.7px,rgba(140,140,140,0.12) 28.7px 31.4px,rgba(140,140,140,0.05) 31.4px 34.0px,rgba(140,140,140,0.06) 34.0px 36.6px,rgba(140,140,140,0.05) 36.6px 39.2px,rgba(140,140,140,0.05) 39.2px 41.8px,rgba(140,140,140,0.15) 41.8px 44.4px,rgba(140,140,140,0.07) 44.4px 47.0px,rgba(140,140,140,0.06) 47.0px 49.6px,rgba(140,140,140,0.14) 49.6px 52.3px,rgba(140,140,140,0.17) 52.3px 54.9px,rgba(140,140,140,0.02) 54.9px 57.5px,rgba(140,140,140,0.17) 57.5px 60.1px,rgba(140,140,140,0.05) 60.1px 62.7px,rgba(140,140,140,0.12) 62.7px 65.3px,rgba(140,140,140,0.09) 65.3px 67.9px,rgba(140,140,140,0.01) 67.9px 70.5px,rgba(140,140,140,0.04) 70.5px 73.2px,rgba(140,140,140,0.17) 73.2px 75.8px,rgba(140,140,140,0.07) 75.8px 78.4px,rgba(140,140,140,0.14) 78.4px 81.0px)"></div></div><!--/PILLNAME-->

<!-- LEFT PANEL -->
<div class="a" style="left:42.3px;top:202px;width:421.3px;height:137.5px;background:#fff;border:1px solid #dedede;border-radius:3px"></div>
<div class="hl" style="left:43.5px;top:225.3px;width:419px;background:#ececec"></div>
<div class="t" style="left:49px;top:211px;font-size:8.8px;color:#565656">How much you can potentially save.</div>
<!-- money bag -->
<svg style="left:0;top:0" width="500" height="350"><g fill="none" stroke="#6a6a6a" stroke-width="1.1" stroke-linejoin="round" stroke-linecap="round">
 <path d="M60.4 273.8h12.3l-2.1 3.7h-8.1z"/>
 <path d="M62.6 277.6C58.8 280.5 56.2 285.5 55.8 291.5a2 2 0 0 0 2 2.2h4.1"/>
 <path d="M70.6 277.6C74 280 76.6 284.5 77.3 289.6"/>
 <path d="M64.6 278.8l-1.8 4.3M66.6 278.6l.9 5.3"/>
 <path d="M65.6 289.7h5M64.2 292.4h5M73.1 292.4h5.2M65.4 295.3h4.6M72.4 295.3h5.3"/>
</g></svg>
<div class="t" style="left:85.3px;top:273.8px;font-size:11.4px;font-weight:400;letter-spacing:.95px;color:#555;-webkit-text-stroke:.4px #555">€487/mo.</div>
<div class="t" style="left:85px;top:288.2px;font-size:7.2px;color:#9a9a9a">Cost Savings</div>
<!-- VMs icon -->
<svg style="left:0;top:0" width="500" height="350"><g fill="none" stroke="#707070" stroke-width="1.1" stroke-linejoin="round" stroke-linecap="round">
 <path d="M254 256.2V252.5a1 1 0 0 1 1-1h10.2a1 1 0 0 1 1 1V260"/>
 <path d="M256.5 256.2h11.7a1 1 0 0 1 1 1v9.6a1 1 0 0 1-1 1h-5.6"/>
 <path d="M259.2 257v10.8h3.4"/>
 <rect x="251.3" y="259.7" width="11.3" height="11.5" rx="1.1"/>
</g></svg>
<div class="t" style="left:279.2px;top:250.8px;font-size:10.8px;font-weight:700;color:#5a5a5a">48</div>
<div class="t" style="left:296px;top:252.2px;font-size:9.6px;color:#6a6a6a">VMs</div>
<div class="t" style="left:279px;top:264.1px;font-size:7.3px;color:#8a8a8a;letter-spacing:.05px">With Reclaimable Resources</div>
<!-- orphan icon -->
<svg style="left:0;top:0" width="500" height="350"><g fill="none" stroke="#707070" stroke-width="1.1" stroke-linejoin="round">
 <path d="M256 317H250.2V297.7h14.9V303.5"/>
 <rect x="260.2" y="305.6" width="6.3" height="6.5" rx="0.6"/>
 <rect x="263.3" y="308.2" width="7.4" height="6.1" rx="0.6" fill="#fff"/>
 <rect x="257.7" y="311.5" width="6.8" height="6.8" rx="0.6" fill="#fff"/>
</g></svg>
<div class="t" style="left:279.3px;top:297.8px;font-size:10.8px;font-weight:700;color:#5a5a5a">0</div>
<div class="t" style="left:289.6px;top:299.3px;font-size:9.6px;color:#6a6a6a;letter-spacing:.15px">Orphaned Disks</div>
<div class="t" style="left:279px;top:310.8px;font-size:7.3px;color:#8a8a8a">To Reclaim</div>

<!-- RIGHT PANEL -->
<div class="a" style="left:473.3px;top:202px;width:632.6px;height:137.5px;background:#fff;border:1px solid #dedede;border-radius:3px"></div>
<div class="hl" style="left:474.5px;top:225.3px;width:630px;background:#ececec"></div>
<div class="t" style="left:480px;top:210.9px;font-size:8.8px;color:#565656">Total Reclaimable Capacity</div>
<div class="t" style="left:486px;top:232.2px;font-size:7px;font-weight:400;color:#3a3a3a;-webkit-text-stroke:.25px #3a3a3a">Resource</div>
<div class="t" style="left:740.6px;top:232.2px;font-size:6.9px;font-weight:400;color:#3a3a3a;-webkit-text-stroke:.25px #3a3a3a">Reclaimable Capacity</div>
<div class="t" style="left:967px;top:232.2px;font-size:6.9px;font-weight:400;color:#3a3a3a;-webkit-text-stroke:.25px #3a3a3a">% Reclaimable</div>
<div class="hl" style="left:479.5px;top:243.2px;width:620px;background:#dcdcdc"></div>
<!--ICONS-->
<svg style="left:0;top:0" width="1120" height="557">
<g fill="none" stroke="#666" stroke-width="0.85"><rect x="486.30" y="251.30" width="10.34" height="8.58" rx="0.6"/><path d="M488.57 251.30v-1.6M488.57 259.88v1.6M486.30 253.19h-1.5M496.64 253.19h1.5M491.47 251.30v-1.6M491.47 259.88v1.6M486.30 255.59h-1.5M496.64 255.59h1.5M494.37 251.30v-1.6M494.37 259.88v1.6M486.30 257.99h-1.5M496.64 257.99h1.5M493.74 253.02V258.17H489.09"/></g>
<g fill="none" stroke="#666" stroke-width="0.9"><path d="M485.20 276.50V275.20a1 1 0 0 1 1-1H496.50a1 1 0 0 1 1 1V276.50M485.20 278.10V281.60a1 1 0 0 0 1 1H490.40M492.30 282.60H496.50a1 1 0 0 0 1-1V278.10"/></g><rect x="487.50" y="276.00" width="1.7" height="2.9" rx="0.5" fill="#666"/><rect x="490.60" y="276.00" width="1.6" height="2.9" rx="0.5" fill="#666" opacity=".7"/><rect x="493.70" y="276.00" width="1.7" height="2.9" rx="0.5" fill="#666"/><circle cx="490.90" cy="281.50" r="0.6" fill="#666"/>
<g fill="none" stroke="#666" stroke-width="0.9"><path d="M485.30 298.00a5.75 1.6 0 0 1 11.50 0V306.00a5.75 1.6 0 0 1 -11.50 0zM486.30 299.50q4.75 0.9 9.50 0M486.30 302.50q4.75 0.9 9.50 0M486.30 305.50q4.75 0.9 9.50 0"/></g>
</svg>

<!--/ICONS-->
<div class="t" style="left:504.3px;top:252px;font-size:8.6px;color:#5a5a5a">CPU</div>
<div class="t" style="left:504.3px;top:275.3px;font-size:8.6px;color:#5a5a5a;letter-spacing:.15px">Memory</div>
<div class="t" style="left:504.3px;top:298.6px;font-size:8.6px;color:#5a5a5a;letter-spacing:.2px">Disk Space</div>
<div class="t" style="left:755.4px;top:252px;font-size:8.6px;color:#5a5a5a">31 vCPUs</div>
<div class="t" style="left:757px;top:275.3px;font-size:8.6px;color:#5a5a5a">11.86 GB</div>
<div class="t" style="left:758.6px;top:298.6px;font-size:8.6px;color:#5a5a5a">3.26 TB</div>
<div class="a" style="left:883px;top:253.2px;width:212px;height:4.6px;background:#ececec"></div>
<div class="a" style="left:883px;top:253.2px;width:40.3px;height:4.6px;background:#d3b6e2"></div>
<div class="a" style="left:883px;top:276.5px;width:212px;height:4.6px;background:#ececec"></div>
<div class="a" style="left:883px;top:276.5px;width:15px;height:4.6px;background:#d3b6e2"></div>
<div class="a" style="left:883px;top:299.8px;width:212px;height:4.6px;background:#ececec"></div>
<div class="a" style="left:883px;top:299.8px;width:39px;height:4.6px;background:#d3b6e2"></div>

<!--/P2-->
<!--P3-->
<!-- DURATION ROW -->
<div class="t" style="left:845.6px;top:355.9px;font-size:8.8px;color:#5a5a5a">Duration older than:</div>
<div class="hl" style="left:926.3px;top:365px;width:87.5px;background:#b5b5b5"></div>
<svg style="left:0;top:0" width="1120" height="400"><g fill="none" stroke="#8a8a8a" stroke-width="0.9">
 <path d="M995.3 358.5l4 4M999.3 358.5l-4 4"/><path d="M1006.3 359.5l2.2 2.2 2.2-2.2"/>
 <circle cx="1021" cy="359.3" r="2.8" stroke="#bbb"/><path d="M1023 361.3l1.7 1.7" stroke="#bbb"/>
</g></svg>
<div class="t" style="left:1028px;top:355.6px;font-size:8px;color:#c3c3c3">Search</div>
<div class="hl" style="left:1017.5px;top:364px;width:87px;background:#b5b5b5"></div>

<!-- TABS -->
<div class="t" style="left:53px;top:380.2px;font-size:8.8px;color:#565656;letter-spacing:-.05px">Powered Off VMs</div>
<div class="badge" style="left:124.9px;top:380.8px;width:31.4px">€388/mo.</div>
<div class="t" style="left:177.5px;top:380.2px;font-size:8.8px;color:#565656;letter-spacing:-.1px">Idle VMs</div>
<div class="badge" style="left:213.3px;top:380.8px;width:31.4px">€100/mo.</div>
<div class="t" style="left:266.7px;top:380.2px;font-size:8.8px;color:#565656;letter-spacing:-.25px">Snapshots</div>
<div class="badge" style="left:310px;top:380.8px;width:25.3px">€0/mo.</div>
<div class="t" style="left:356.7px;top:380.2px;font-size:8.8px;color:#565656;letter-spacing:-.2px">Orphaned Disks</div>
<div class="badge" style="left:421.4px;top:380.8px;width:25.3px">€0/mo.</div>
<svg style="left:0;top:0" width="600" height="400"><g fill="none" stroke="#666" stroke-width="0.8">
 <circle cx="475.9" cy="385" r="4.75"/><path d="M475.9 384.3v3.4"/><path d="M475.9 382.4v.9" stroke-width="1"/>
</g></svg>
<div class="hl" style="left:43px;top:394px;width:1062px;background:#d7d7d7"></div>
<div class="a" style="left:176px;top:393px;width:74.2px;height:2px;background:#0079b8"></div>

<!-- BUTTONS -->
<div class="a" style="left:43px;top:403.3px;width:372px;height:13.5px;border:1px solid #dedede;border-radius:2px"></div>
<div class="vl" style="left:134.3px;top:403.3px;height:13.5px;background:#dedede"></div>
<div class="vl" style="left:200.7px;top:403.3px;height:13.5px;background:#dedede"></div>
<div class="vl" style="left:282.6px;top:403.3px;height:13.5px;background:#dedede"></div>
<div class="a" style="left:355px;top:403.3px;width:60px;height:13.5px;border:1px solid #62a8d2;border-radius:0 2px 2px 0"></div>
<div class="t" style="left:51.4px;top:406.9px;font-size:7.3px;letter-spacing:.12px;color:#bdbdbd">SCHEDULE ACTION</div>
<svg style="left:0;top:0" width="600" height="420"><path d="M121.2 408.6l2.5 2.5 2.5-2.5" fill="none" stroke="#bdbdbd" stroke-width="0.9"/></svg>
<div class="t" style="left:142.6px;top:406.9px;font-size:7.3px;letter-spacing:.15px;color:#bdbdbd">DELETE VM(S)</div>
<div class="t" style="left:208.6px;top:406.9px;font-size:7.3px;letter-spacing:.05px;color:#bdbdbd">POWER OFF VM(S)</div>
<div class="t" style="left:290.7px;top:406.9px;font-size:7.3px;letter-spacing:.05px;color:#bdbdbd">EXCLUDE VM(S)</div>
<div class="t" style="left:362.9px;top:406.9px;font-size:7.3px;letter-spacing:.15px;color:#1f86bf">EXPORT ALL</div>

<div class="t" style="left:925px;top:406.6px;font-size:8.75px;color:#5a5a5a;letter-spacing:-.1px">Calculated based on:</div>
<div class="a" style="left:1011.3px;top:408.8px;width:4.6px;height:4.6px;border-radius:50%;background:#004c75"></div>
<div class="t" style="left:1018.9px;top:406.6px;font-size:8.75px;color:#5a5a5a;letter-spacing:-.05px">Allocation</div>
<div class="a" style="left:1064.3px;top:408.8px;width:4.6px;height:4.6px;border-radius:50%;background:#85cbe5"></div>
<div class="t" style="left:1072px;top:406.6px;font-size:8.75px;color:#5a5a5a;letter-spacing:-.2px">Demand</div>

<!--/P3-->
<!--TABLE-->
<div class="a" style="left:42.3px;top:426px;width:1063.9px;height:140px;background:#fff;border:1px solid #dadada;border-radius:3px"></div>
<div class="a" style="left:43.3px;top:451px;width:1062px;height:20px;background:#fafafa"></div>
<div class="hl" style="left:43.3px;top:450.6px;width:1062px;background:#dedede"></div>
<div class="hl" style="left:43.5px;top:470.8px;width:1062px;background:#dedede"></div>
<div class="hl" style="left:43.5px;top:493.1px;width:1062px;background:#e6e6e6"></div>
<div class="hl" style="left:43.5px;top:514.6px;width:1062px;background:#e6e6e6"></div>
<div class="hl" style="left:43.5px;top:536.3px;width:1062px;background:#e6e6e6"></div>
<svg style="left:0;top:0" width="1120" height="557"><g fill="none" stroke="#777" stroke-width="0.9">
 <path d="M47.6 435.2l2.6 2.6 2.6-2.6"/>
 <path d="M62.4 433.3h2.4M71 433.3h2.3v8.3h-10.9v-8.3M64.9 441.6v-9a.9.9 0 0 1 .9-.9h4.1a.9.9 0 0 1 .9.9v9M65.6 433.6h4.5M67.8 439.6v1.6"/>
</g>
<path d="M426.4 457v5.2M424.5 460.3l1.9 2 1.9-2" fill="none" stroke="#3795d2" stroke-width="0.9"/>
</svg>
<div class="t" style="left:79.7px;top:433.8px;font-size:8px;color:#5a5a5a">TAM_cluster</div>
<div class="t" style="left:359.6px;top:434px;font-size:8.2px;color:#6a6a6a">€100/mo.</div>
<div class="a" style="left:506px;top:427px;width:2.4px;height:23.7px;background:#83c8e0"></div>
<div class="a" style="left:656.5px;top:427px;width:2.4px;height:23.7px;background:#83c8e0"></div>
<div class="a" style="left:806.5px;top:427px;width:2.4px;height:23.7px;background:#83c8e0"></div>
<div class="t" style="left:526px;top:434px;font-size:8.2px;color:#6a6a6a;letter-spacing:-.2px">31 vCPUs</div>
<div class="t" style="left:676px;top:434px;font-size:8.2px;color:#6a6a6a;letter-spacing:-.2px">11.86 GB</div>
<div class="t" style="left:825.5px;top:434px;font-size:8.2px;color:#6a6a6a;letter-spacing:-.2px">66.96 GB</div>
<div class="cb" style="left:47.3px;top:456.4px"></div>
<div class="vl" style="left:60.2px;top:454.2px;height:13.6px;background:#e0e0e0"></div>
<div class="vl" style="left:358.3px;top:454.2px;height:13.6px;background:#e0e0e0"></div>
<div class="vl" style="left:507.4px;top:454.2px;height:13.6px;background:#e0e0e0"></div>
<div class="vl" style="left:657.2px;top:454.2px;height:13.6px;background:#e0e0e0"></div>
<div class="vl" style="left:806.2px;top:454.2px;height:13.6px;background:#e0e0e0"></div>
<div class="vl" style="left:955.0px;top:454.2px;height:13.6px;background:#e0e0e0"></div>
<div class="vl" style="left:1104.5px;top:451px;height:20px;background:#e0e0e0"></div>
<div class="t" style="left:64.6px;top:458.6px;font-size:6.9px;font-weight:400;color:#3a3a3a;-webkit-text-stroke:0.25px #3a3a3a">VM Name</div>
<div class="t" style="left:362.3px;top:458.6px;font-size:6.9px;font-weight:400;color:#3a3a3a;-webkit-text-stroke:0.25px #3a3a3a">Cost Savings / mo</div>
<div class="t" style="left:511.8px;top:458.6px;font-size:6.9px;font-weight:400;color:#3a3a3a;-webkit-text-stroke:0.25px #3a3a3a">Reclaimable CPU</div>
<div class="t" style="left:660.8px;top:458.6px;font-size:6.9px;font-weight:400;color:#3a3a3a;-webkit-text-stroke:0.25px #3a3a3a">Reclaimable Memory</div>
<div class="t" style="left:810.4px;top:458.6px;font-size:6.9px;font-weight:400;color:#3a3a3a;-webkit-text-stroke:0.25px #3a3a3a">Reclaimable Disk Space</div>
<div class="t" style="left:959.7px;top:458.6px;font-size:6.9px;font-weight:400;color:#3a3a3a;-webkit-text-stroke:0.25px #3a3a3a">Duration</div>
<div class="cb" style="left:47.3px;top:478.3px"></div>
<div class="a" style="left:63px;top:477.2px;width:64.1px;height:9.30px;filter:blur(0.45px)"><div class="a" style="left:0;top:0.00px;width:64.1px;height:2.45px;background:linear-gradient(90deg,rgba(80,160,215,0.00) 0.0px 2.5px,rgba(80,160,215,0.17) 2.5px 4.9px,rgba(80,160,215,0.20) 4.9px 7.4px,rgba(80,160,215,0.10) 7.4px 9.9px,rgba(80,160,215,0.08) 9.9px 12.3px,rgba(80,160,215,0.15) 12.3px 14.8px,rgba(80,160,215,0.06) 14.8px 17.3px,rgba(80,160,215,0.08) 17.3px 19.7px,rgba(80,160,215,0.01) 19.7px 22.2px,rgba(80,160,215,0.05) 22.2px 24.7px,rgba(80,160,215,0.20) 24.7px 27.1px,rgba(80,160,215,0.12) 27.1px 29.6px,rgba(80,160,215,0.01) 29.6px 32.0px,rgba(80,160,215,0.19) 32.0px 34.5px,rgba(80,160,215,0.07) 34.5px 37.0px,rgba(80,160,215,0.15) 37.0px 39.4px,rgba(80,160,215,0.21) 39.4px 41.9px,rgba(80,160,215,0.10) 41.9px 44.4px,rgba(80,160,215,0.00) 44.4px 46.8px,rgba(80,160,215,0.01) 46.8px 49.3px,rgba(80,160,215,0.04) 49.3px 51.8px,rgba(80,160,215,0.06) 51.8px 54.2px,rgba(80,160,215,0.12) 54.2px 56.7px,rgba(80,160,215,0.13) 56.7px 59.2px,rgba(80,160,215,0.14) 59.2px 61.6px,rgba(80,160,215,0.05) 61.6px 64.1px)"></div><div class="a" style="left:0;top:2.40px;width:64.1px;height:3.65px;background:linear-gradient(90deg,rgba(80,160,215,0.49) 0.0px 2.5px,rgba(80,160,215,0.59) 2.5px 4.9px,rgba(80,160,215,0.58) 4.9px 7.4px,rgba(80,160,215,0.53) 7.4px 9.9px,rgba(80,160,215,0.37) 9.9px 12.3px,rgba(80,160,215,0.45) 12.3px 14.8px,rgba(80,160,215,0.33) 14.8px 17.3px,rgba(80,160,215,0.52) 17.3px 19.7px,rgba(80,160,215,0.09) 19.7px 22.2px,rgba(80,160,215,0.42) 22.2px 24.7px,rgba(80,160,215,0.56) 24.7px 27.1px,rgba(80,160,215,0.56) 27.1px 29.6px,rgba(80,160,215,0.52) 29.6px 32.0px,rgba(80,160,215,0.46) 32.0px 34.5px,rgba(80,160,215,0.47) 34.5px 37.0px,rgba(80,160,215,0.45) 37.0px 39.4px,rgba(80,160,215,0.33) 39.4px 41.9px,rgba(80,160,215,0.29) 41.9px 44.4px,rgba(80,160,215,0.51) 44.4px 46.8px,rgba(80,160,215,0.29) 46.8px 49.3px,rgba(80,160,215,0.36) 49.3px 51.8px,rgba(80,160,215,0.31) 51.8px 54.2px,rgba(80,160,215,0.43) 54.2px 56.7px,rgba(80,160,215,0.41) 56.7px 59.2px,rgba(80,160,215,0.43) 59.2px 61.6px,rgba(80,160,215,0.44) 61.6px 64.1px)"></div><div class="a" style="left:0;top:6.00px;width:64.1px;height:3.35px;background:linear-gradient(90deg,rgba(80,160,215,0.19) 0.0px 2.5px,rgba(80,160,215,0.14) 2.5px 4.9px,rgba(80,160,215,0.14) 4.9px 7.4px,rgba(80,160,215,0.25) 7.4px 9.9px,rgba(80,160,215,0.25) 9.9px 12.3px,rgba(80,160,215,0.25) 12.3px 14.8px,rgba(80,160,215,0.14) 14.8px 17.3px,rgba(80,160,215,0.15) 17.3px 19.7px,rgba(80,160,215,0.02) 19.7px 22.2px,rgba(80,160,215,0.06) 22.2px 24.7px,rgba(80,160,215,0.24) 24.7px 27.1px,rgba(80,160,215,0.13) 27.1px 29.6px,rgba(80,160,215,0.23) 29.6px 32.0px,rgba(80,160,215,0.08) 32.0px 34.5px,rgba(80,160,215,0.13) 34.5px 37.0px,rgba(80,160,215,0.10) 37.0px 39.4px,rgba(80,160,215,0.22) 39.4px 41.9px,rgba(80,160,215,0.18) 41.9px 44.4px,rgba(80,160,215,0.08) 44.4px 46.8px,rgba(80,160,215,0.18) 46.8px 49.3px,rgba(80,160,215,0.21) 49.3px 51.8px,rgba(80,160,215,0.05) 51.8px 54.2px,rgba(80,160,215,0.04) 54.2px 56.7px,rgba(80,160,215,0.23) 56.7px 59.2px,rgba(80,160,215,0.10) 59.2px 61.6px,rgba(80,160,215,0.25) 61.6px 64.1px)"></div></div>
<div class="t" style="left:362px;top:479.1px;font-size:8.2px;color:#5a5a5a;letter-spacing:-.1px">€17/mo.</div>
<div class="t" style="left:511.8px;top:479.1px;font-size:8.2px;color:#5a5a5a;letter-spacing:-.1px">2 vCPUs</div>
<div class="t" style="left:661px;top:479.1px;font-size:8.2px;color:#5a5a5a;letter-spacing:-.1px">3.04 GB</div>
<div class="t" style="left:810.4px;top:479.1px;font-size:8.2px;color:#5a5a5a;letter-spacing:-.1px">28.58 GB</div>
<div class="t" style="left:959.7px;top:479.1px;font-size:8.2px;color:#5a5a5a;letter-spacing:-.1px">6 Days</div>
<div class="cb" style="left:47.3px;top:499.9px"></div>
<div class="a" style="left:63px;top:498.8px;width:75px;height:9.30px;filter:blur(0.45px)"><div class="a" style="left:0;top:0.00px;width:75px;height:2.45px;background:linear-gradient(90deg,rgba(80,160,215,0.01) 0.0px 2.5px,rgba(80,160,215,0.10) 2.5px 5.0px,rgba(80,160,215,0.15) 5.0px 7.5px,rgba(80,160,215,0.11) 7.5px 10.0px,rgba(80,160,215,0.04) 10.0px 12.5px,rgba(80,160,215,0.13) 12.5px 15.0px,rgba(80,160,215,0.16) 15.0px 17.5px,rgba(80,160,215,0.00) 17.5px 20.0px,rgba(80,160,215,0.03) 20.0px 22.5px,rgba(80,160,215,0.08) 22.5px 25.0px,rgba(80,160,215,0.09) 25.0px 27.5px,rgba(80,160,215,0.12) 27.5px 30.0px,rgba(80,160,215,0.13) 30.0px 32.5px,rgba(80,160,215,0.08) 32.5px 35.0px,rgba(80,160,215,0.13) 35.0px 37.5px,rgba(80,160,215,0.11) 37.5px 40.0px,rgba(80,160,215,0.01) 40.0px 42.5px,rgba(80,160,215,0.04) 42.5px 45.0px,rgba(80,160,215,0.06) 45.0px 47.5px,rgba(80,160,215,0.10) 47.5px 50.0px,rgba(80,160,215,0.05) 50.0px 52.5px,rgba(80,160,215,0.20) 52.5px 55.0px,rgba(80,160,215,0.04) 55.0px 57.5px,rgba(80,160,215,0.01) 57.5px 60.0px,rgba(80,160,215,0.19) 60.0px 62.5px,rgba(80,160,215,0.04) 62.5px 65.0px,rgba(80,160,215,0.07) 65.0px 67.5px,rgba(80,160,215,0.10) 67.5px 70.0px,rgba(80,160,215,0.09) 70.0px 72.5px,rgba(80,160,215,0.11) 72.5px 75.0px)"></div><div class="a" style="left:0;top:2.40px;width:75px;height:3.65px;background:linear-gradient(90deg,rgba(80,160,215,0.48) 0.0px 2.5px,rgba(80,160,215,0.34) 2.5px 5.0px,rgba(80,160,215,0.25) 5.0px 7.5px,rgba(80,160,215,0.44) 7.5px 10.0px,rgba(80,160,215,0.42) 10.0px 12.5px,rgba(80,160,215,0.35) 12.5px 15.0px,rgba(80,160,215,0.27) 15.0px 17.5px,rgba(80,160,215,0.36) 17.5px 20.0px,rgba(80,160,215,0.27) 20.0px 22.5px,rgba(80,160,215,0.30) 22.5px 25.0px,rgba(80,160,215,0.37) 25.0px 27.5px,rgba(80,160,215,0.50) 27.5px 30.0px,rgba(80,160,215,0.42) 30.0px 32.5px,rgba(80,160,215,0.36) 32.5px 35.0px,rgba(80,160,215,0.47) 35.0px 37.5px,rgba(80,160,215,0.51) 37.5px 40.0px,rgba(80,160,215,0.59) 40.0px 42.5px,rgba(80,160,215,0.44) 42.5px 45.0px,rgba(80,160,215,0.30) 45.0px 47.5px,rgba(80,160,215,0.56) 47.5px 50.0px,rgba(80,160,215,0.55) 50.0px 52.5px,rgba(80,160,215,0.32) 52.5px 55.0px,rgba(80,160,215,0.37) 55.0px 57.5px,rgba(80,160,215,0.51) 57.5px 60.0px,rgba(80,160,215,0.36) 60.0px 62.5px,rgba(80,160,215,0.30) 62.5px 65.0px,rgba(80,160,215,0.52) 65.0px 67.5px,rgba(80,160,215,0.55) 67.5px 70.0px,rgba(80,160,215,0.26) 70.0px 72.5px,rgba(80,160,215,0.56) 72.5px 75.0px)"></div><div class="a" style="left:0;top:6.00px;width:75px;height:3.35px;background:linear-gradient(90deg,rgba(80,160,215,0.11) 0.0px 2.5px,rgba(80,160,215,0.10) 2.5px 5.0px,rgba(80,160,215,0.05) 5.0px 7.5px,rgba(80,160,215,0.05) 7.5px 10.0px,rgba(80,160,215,0.22) 10.0px 12.5px,rgba(80,160,215,0.07) 12.5px 15.0px,rgba(80,160,215,0.10) 15.0px 17.5px,rgba(80,160,215,0.12) 17.5px 20.0px,rgba(80,160,215,0.20) 20.0px 22.5px,rgba(80,160,215,0.17) 22.5px 25.0px,rgba(80,160,215,0.11) 25.0px 27.5px,rgba(80,160,215,0.06) 27.5px 30.0px,rgba(80,160,215,0.23) 30.0px 32.5px,rgba(80,160,215,0.23) 32.5px 35.0px,rgba(80,160,215,0.07) 35.0px 37.5px,rgba(80,160,215,0.12) 37.5px 40.0px,rgba(80,160,215,0.05) 40.0px 42.5px,rgba(80,160,215,0.17) 42.5px 45.0px,rgba(80,160,215,0.19) 45.0px 47.5px,rgba(80,160,215,0.05) 47.5px 50.0px,rgba(80,160,215,0.05) 50.0px 52.5px,rgba(80,160,215,0.21) 52.5px 55.0px,rgba(80,160,215,0.11) 55.0px 57.5px,rgba(80,160,215,0.06) 57.5px 60.0px,rgba(80,160,215,0.05) 60.0px 62.5px,rgba(80,160,215,0.11) 62.5px 65.0px,rgba(80,160,215,0.20) 65.0px 67.5px,rgba(80,160,215,0.11) 67.5px 70.0px,rgba(80,160,215,0.06) 70.0px 72.5px,rgba(80,160,215,0.21) 72.5px 75.0px)"></div></div>
<div class="t" style="left:362px;top:500.7px;font-size:8.2px;color:#5a5a5a;letter-spacing:-.1px">€12/mo.</div>
<div class="t" style="left:511.8px;top:500.7px;font-size:8.2px;color:#5a5a5a;letter-spacing:-.1px">1 vCPUs</div>
<div class="t" style="left:661px;top:500.7px;font-size:8.2px;color:#5a5a5a;letter-spacing:-.1px">2.03 GB</div>
<div class="t" style="left:810.4px;top:500.7px;font-size:8.2px;color:#5a5a5a;letter-spacing:-.1px">12.5 GB</div>
<div class="t" style="left:959.7px;top:500.7px;font-size:8.2px;color:#5a5a5a;letter-spacing:-.1px">26 Days</div>
<div class="cb" style="left:47.3px;top:521.6px"></div>
<div class="a" style="left:63px;top:520.5px;width:17.6px;height:9.30px;filter:blur(0.45px)"><div class="a" style="left:0;top:0.00px;width:17.6px;height:2.45px;background:linear-gradient(90deg,rgba(80,160,215,0.05) 0.0px 2.5px,rgba(80,160,215,0.21) 2.5px 5.0px,rgba(80,160,215,0.08) 5.0px 7.5px,rgba(80,160,215,0.02) 7.5px 10.1px,rgba(80,160,215,0.13) 10.1px 12.6px,rgba(80,160,215,0.14) 12.6px 15.1px,rgba(80,160,215,0.04) 15.1px 17.6px)"></div><div class="a" style="left:0;top:2.40px;width:17.6px;height:3.65px;background:linear-gradient(90deg,rgba(80,160,215,0.39) 0.0px 2.5px,rgba(80,160,215,0.44) 2.5px 5.0px,rgba(80,160,215,0.54) 5.0px 7.5px,rgba(80,160,215,0.36) 7.5px 10.1px,rgba(80,160,215,0.33) 10.1px 12.6px,rgba(80,160,215,0.50) 12.6px 15.1px,rgba(80,160,215,0.55) 15.1px 17.6px)"></div><div class="a" style="left:0;top:6.00px;width:17.6px;height:3.35px;background:linear-gradient(90deg,rgba(80,160,215,0.22) 0.0px 2.5px,rgba(80,160,215,0.07) 2.5px 5.0px,rgba(80,160,215,0.23) 5.0px 7.5px,rgba(80,160,215,0.26) 7.5px 10.1px,rgba(80,160,215,0.14) 10.1px 12.6px,rgba(80,160,215,0.08) 12.6px 15.1px,rgba(80,160,215,0.14) 15.1px 17.6px)"></div></div>
<div class="t" style="left:362px;top:522.4px;font-size:8.2px;color:#5a5a5a;letter-spacing:-.1px">€6/mo.</div>
<div class="t" style="left:511.8px;top:522.4px;font-size:8.2px;color:#5a5a5a;letter-spacing:-.1px">2 vCPUs</div>
<div class="t" style="left:661px;top:522.4px;font-size:8.2px;color:#5a5a5a;letter-spacing:-.1px">819.27 MB</div>
<div class="t" style="left:810.4px;top:522.4px;font-size:8.2px;color:#5a5a5a;letter-spacing:-.1px">2.21 GB</div>
<div class="t" style="left:959.7px;top:522.4px;font-size:8.2px;color:#5a5a5a;letter-spacing:-.1px">168 Days</div>
<div class="cb" style="left:47.3px;top:543.3px"></div>
<div class="a" style="left:63px;top:542.2px;width:32.5px;height:9.30px;filter:blur(0.45px)"><div class="a" style="left:0;top:0.00px;width:32.5px;height:2.45px;background:linear-gradient(90deg,rgba(80,160,215,0.20) 0.0px 2.5px,rgba(80,160,215,0.20) 2.5px 5.0px,rgba(80,160,215,0.10) 5.0px 7.5px,rgba(80,160,215,0.03) 7.5px 10.0px,rgba(80,160,215,0.11) 10.0px 12.5px,rgba(80,160,215,0.01) 12.5px 15.0px,rgba(80,160,215,0.11) 15.0px 17.5px,rgba(80,160,215,0.07) 17.5px 20.0px,rgba(80,160,215,0.20) 20.0px 22.5px,rgba(80,160,215,0.06) 22.5px 25.0px,rgba(80,160,215,0.07) 25.0px 27.5px,rgba(80,160,215,0.16) 27.5px 30.0px,rgba(80,160,215,0.12) 30.0px 32.5px)"></div><div class="a" style="left:0;top:2.40px;width:32.5px;height:3.65px;background:linear-gradient(90deg,rgba(80,160,215,0.42) 0.0px 2.5px,rgba(80,160,215,0.33) 2.5px 5.0px,rgba(80,160,215,0.52) 5.0px 7.5px,rgba(80,160,215,0.10) 7.5px 10.0px,rgba(80,160,215,0.45) 10.0px 12.5px,rgba(80,160,215,0.29) 12.5px 15.0px,rgba(80,160,215,0.41) 15.0px 17.5px,rgba(80,160,215,0.28) 17.5px 20.0px,rgba(80,160,215,0.47) 20.0px 22.5px,rgba(80,160,215,0.08) 22.5px 25.0px,rgba(80,160,215,0.43) 25.0px 27.5px,rgba(80,160,215,0.53) 27.5px 30.0px,rgba(80,160,215,0.59) 30.0px 32.5px)"></div><div class="a" style="left:0;top:6.00px;width:32.5px;height:3.35px;background:linear-gradient(90deg,rgba(80,160,215,0.05) 0.0px 2.5px,rgba(80,160,215,0.17) 2.5px 5.0px,rgba(80,160,215,0.10) 5.0px 7.5px,rgba(80,160,215,0.01) 7.5px 10.0px,rgba(80,160,215,0.15) 10.0px 12.5px,rgba(80,160,215,0.22) 12.5px 15.0px,rgba(80,160,215,0.18) 15.0px 17.5px,rgba(80,160,215,0.25) 17.5px 20.0px,rgba(80,160,215,0.23) 20.0px 22.5px,rgba(80,160,215,0.01) 22.5px 25.0px,rgba(80,160,215,0.19) 25.0px 27.5px,rgba(80,160,215,0.07) 27.5px 30.0px,rgba(80,160,215,0.15) 30.0px 32.5px)"></div></div>
<div class="t" style="left:362px;top:544.1px;font-size:8.2px;color:#5a5a5a;letter-spacing:-.1px">€6/mo.</div>
<div class="t" style="left:511.8px;top:544.1px;font-size:8.2px;color:#5a5a5a;letter-spacing:-.1px">2 vCPUs</div>
<div class="t" style="left:661px;top:544.1px;font-size:8.2px;color:#5a5a5a;letter-spacing:-.1px">811.44 MB</div>
<div class="t" style="left:810.4px;top:544.1px;font-size:8.2px;color:#5a5a5a;letter-spacing:-.1px">2.17 GB</div>
<div class="t" style="left:959.7px;top:544.1px;font-size:8.2px;color:#5a5a5a;letter-spacing:-.1px">176 Days</div>
<svg style="left:0;top:0" width="1120" height="557"><g fill="none" stroke="#555" stroke-width="0.85"><rect x="514.50" y="434.50" width="9.40" height="7.80" rx="0.6"/><path d="M516.57 434.50v-1.6M516.57 442.30v1.6M514.50 436.22h-1.5M523.90 436.22h1.5M519.20 434.50v-1.6M519.20 442.30v1.6M514.50 438.40h-1.5M523.90 438.40h1.5M521.83 434.50v-1.6M521.83 442.30v1.6M514.50 440.59h-1.5M523.90 440.59h1.5M521.27 436.06V440.74H517.04"/></g><g fill="none" stroke="#555" stroke-width="0.9"><path d="M662.90 436.50V435.20a1 1 0 0 1 1-1H674.20a1 1 0 0 1 1 1V436.50M662.90 438.10V441.60a1 1 0 0 0 1 1H668.10M670.00 442.60H674.20a1 1 0 0 0 1-1V438.10"/></g><rect x="665.20" y="436.00" width="1.7" height="2.9" rx="0.5" fill="#555"/><rect x="668.30" y="436.00" width="1.6" height="2.9" rx="0.5" fill="#555" opacity=".7"/><rect x="671.40" y="436.00" width="1.7" height="2.9" rx="0.5" fill="#555"/><circle cx="668.60" cy="441.50" r="0.6" fill="#555"/><g fill="none" stroke="#555" stroke-width="0.9"><path d="M813.20 433.90a5.75 1.6 0 0 1 11.50 0V442.90a5.75 1.6 0 0 1 -11.50 0zM814.20 435.40q4.75 0.9 9.50 0M814.20 438.40q4.75 0.9 9.50 0M814.20 441.40q4.75 0.9 9.50 0"/></g></svg>

<!--/TABLE-->
</body></html>
